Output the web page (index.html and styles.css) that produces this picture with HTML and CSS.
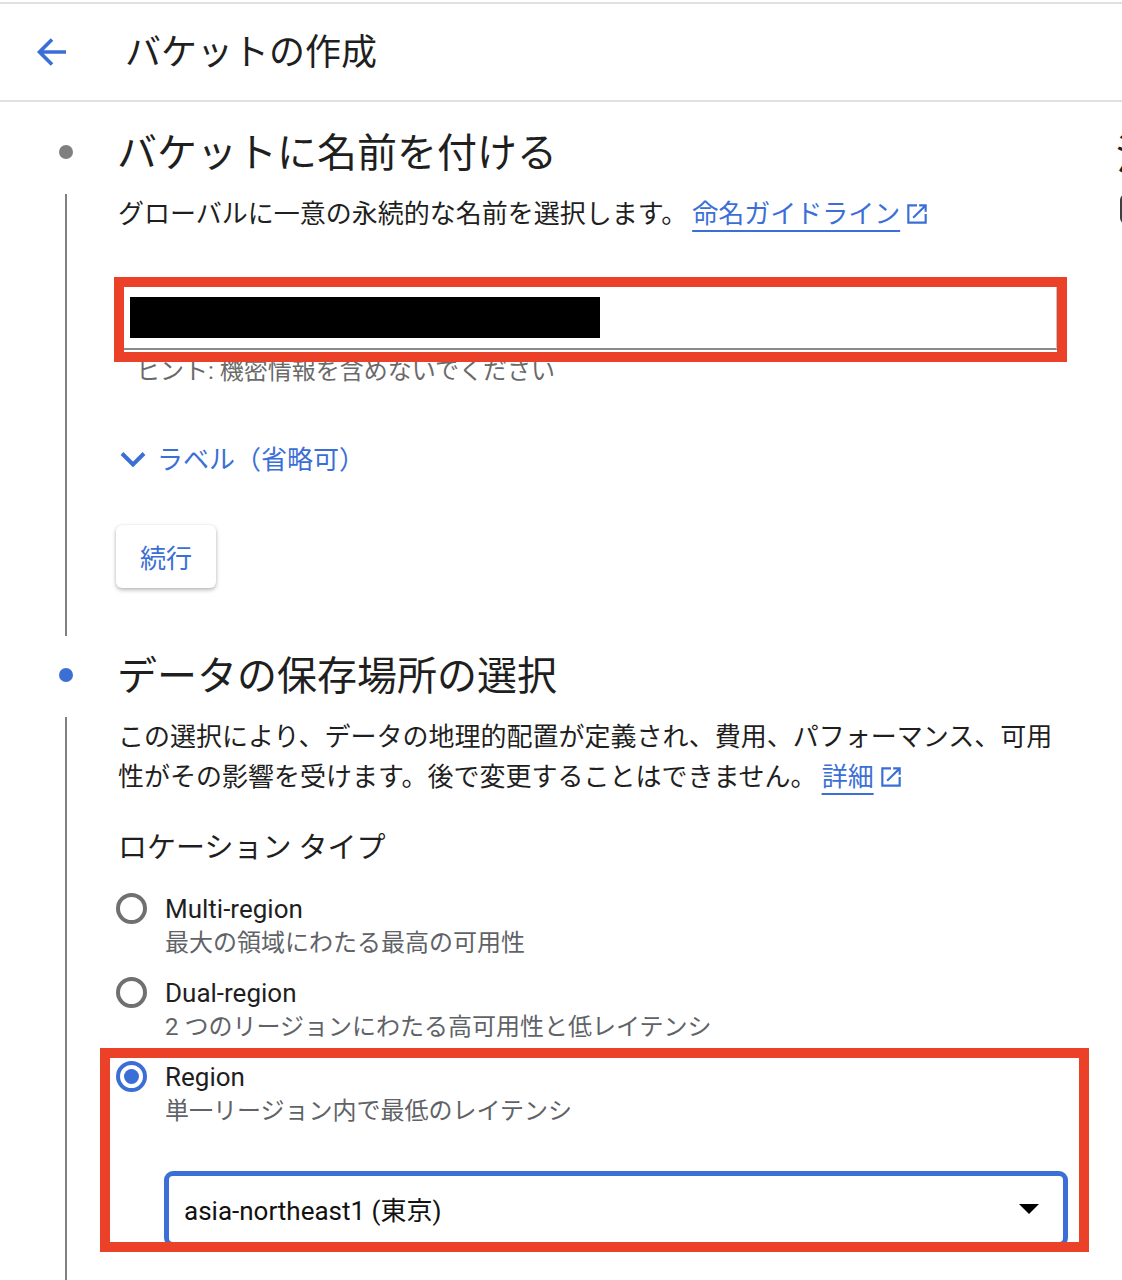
FILE: index.html
```html
<!DOCTYPE html>
<html lang="ja">
<head>
    <meta charset="UTF-8">
    <meta name="viewport" content="width=device-width, initial-scale=1.0">
    <title>バケットの作成</title>
    <link rel="stylesheet" href="styles.css">
</head>
<body>
    <header class="topbar">
        <a class="back" href="#">
            <svg width="32" height="32" viewBox="0 0 32 32" aria-hidden="true">
                <path d="M30 16H4M16 3.5 3.5 16 16 28.5" fill="none" stroke="#3b6fd6" stroke-width="3.6"/>
            </svg>
        </a>
        <h1>バケットの作成</h1>
    </header>

    <div class="layout">
        <main class="steps">
            <!-- step 1: name -->
            <section class="step">
                <div class="step-head">
                    <span class="dot"></span>
                    <h2>バケットに名前を付ける</h2>
                </div>
                <div class="step-body">
                    <p class="desc">グローバルに一意の永続的な名前を選択します。<a class="ext" href="#"><span>命名ガイドライン</span><svg width="26" height="26" viewBox="0 0 24 24" aria-hidden="true"><path d="M19 19H5V5h7V3H3v18h18v-9h-2v7zM14 3v2h3.59l-9.83 9.83 1.41 1.41L19 6.41V10h2V3h-7z" fill="#3b6fd6"/></svg></a></p>

                    <div class="annot annot-name">
                        <div class="name-field">
                            <span class="redact"></span>
                        </div>
                    </div>
                    <p class="hint">ヒント: 機密情報を含めないでください</p>

                    <a class="toggle" href="#">
                        <svg width="26" height="16" viewBox="0 0 26 16" aria-hidden="true">
                            <path d="M2 2.5 13 13.5 24 2.5" fill="none" stroke="#3b6fd6" stroke-width="4"/>
                        </svg>
                        <span>ラベル（省略可）</span>
                    </a>

                    <button class="btn" type="button">続行</button>
                </div>
            </section>

            <!-- step 2: location -->
            <section class="step">
                <div class="step-head">
                    <span class="dot active"></span>
                    <h2>データの保存場所の選択</h2>
                </div>
                <div class="step-body long">
                    <p class="desc">この選択により、データの地理的配置が定義され、費用、パフォーマンス、可用性がその影響を受けます。後で変更することはできません。<a class="ext" href="#"><span>詳細</span><svg width="26" height="26" viewBox="0 0 24 24" aria-hidden="true"><path d="M19 19H5V5h7V3H3v18h18v-9h-2v7zM14 3v2h3.59l-9.83 9.83 1.41 1.41L19 6.41V10h2V3h-7z" fill="#3b6fd6"/></svg></a></p>

                    <h3 class="field-label">ロケーション タイプ</h3>

                    <div class="options">
                        <label class="option">
                            <span class="radio"></span>
                            <span class="option-text">
                                <span class="option-title">Multi-region</span>
                                <span class="option-desc">最大の領域にわたる最高の可用性</span>
                            </span>
                        </label>
                        <label class="option">
                            <span class="radio"></span>
                            <span class="option-text">
                                <span class="option-title">Dual-region</span>
                                <span class="option-desc">2 つのリージョンにわたる高可用性と低レイテンシ</span>
                            </span>
                        </label>
                    </div>

                    <div class="annot annot-region">
                        <label class="option">
                            <span class="radio checked"></span>
                            <span class="option-text">
                                <span class="option-title">Region</span>
                                <span class="option-desc">単一リージョン内で最低のレイテンシ</span>
                            </span>
                        </label>
                        <div class="select">
                            <span>asia-northeast1 (東京)</span>
                            <span class="caret"></span>
                        </div>
                    </div>
                </div>
            </section>
        </main>

        <aside class="side">
            <h2>注意</h2>
            <div class="side-box"></div>
        </aside>
    </div>
</body>
</html>
```

FILE: styles.css
```css
html, body {
    overflow: hidden;
}

body {
    margin: 0;
    padding-top: 2px;
    font-family: Roboto, "Noto Sans CJK JP", sans-serif;
    color: #1f1f1f;
    background: #fff;
}

a {
    text-decoration: none;
}

/* header */
.topbar {
    display: flex;
    align-items: center;
    height: 96px;
    border-top: 2px solid #dfdfe4;
    border-bottom: 2px solid #dfdfe4;
    padding-left: 36px;
}

.back {
    display: flex;
    width: 32px;
    height: 32px;
}

.topbar h1 {
    margin: 0 0 6px 57px;
    font-family: "Noto Sans CJK JP", sans-serif;
    font-size: 36px;
    font-weight: 400;
    line-height: 48px;
}

.layout {
    display: flex;
}

.steps {
    flex: none;
    width: 1116px;
    padding-top: 26px;
}

/* stepper */
.step + .step {
    margin-top: 15px;
}

.step-head {
    display: flex;
    align-items: center;
    height: 48px;
}

.dot {
    flex: none;
    width: 14px;
    height: 14px;
    margin-left: 59px;
    border-radius: 50%;
    background: #7f7f7f;
}

.dot.active {
    background: #3b6fd6;
}

.step-head h2 {
    margin: 0 0 4px 44px;
    font-family: "Noto Sans CJK JP", sans-serif;
    font-size: 40px;
    font-weight: 400;
    line-height: 48px;
}

.step-body {
    margin: 18px 0 0 65px;
    border-left: 2px solid #808080;
    padding: 0 48px 48px 51px;
}

.step-body.long {
    padding-bottom: 60px;
}

.desc {
    margin: 0;
    font-size: 26px;
    line-height: 40px;
}

.ext {
    margin-left: 5px;
    color: #3b6fd6;
}

.ext span {
    text-decoration: underline;
    text-decoration-thickness: 2px;
    text-underline-offset: 7px;
}

.ext svg {
    vertical-align: -4px;
    margin-left: 4px;
}

/* red annotation frames drawn over the content */
.annot {
    position: relative;
}

.annot::after {
    content: '';
    position: absolute;
    inset: 0;
    border: 10px solid #ea4128;
    pointer-events: none;
}

.annot-name {
    z-index: 1;
    width: 933px;
    margin: 43px 0 0 -4px;
    padding: 10px;
}

.name-field {
    box-sizing: border-box;
    height: 63px;
    margin-bottom: 2px;
    padding: 10px 0 0 6px;
    border-bottom: 2px solid #8a8a8a;
    border-right: 1px solid #c4c4c4;
}

.redact {
    display: block;
    width: 470px;
    height: 41px;
    background: #000;
}

.hint {
    position: relative;
    margin: -7px 0 0;
    padding-left: 18px;
    font-size: 24px;
    line-height: 32px;
    color: #6a6a6a;
}

.toggle {
    display: flex;
    align-items: center;
    gap: 11px;
    margin-top: 52px;
    margin-left: 2px;
    height: 40px;
    font-size: 26px;
    color: #3b6fd6;
}

.toggle span {
    margin-bottom: 3px;
}

.btn {
    display: block;
    margin: 46px 0 0 -2px;
    height: 63px;
    padding: 0 24px;
    border: none;
    border-radius: 6px;
    background: #fff;
    box-shadow: 0 2px 4px rgba(0, 0, 0, 0.28), 0 0 2px rgba(0, 0, 0, 0.08);
    font-family: inherit;
    font-size: 26px;
    color: #3b6fd6;
}

/* location type */
.field-label {
    margin: 31px 0 0;
    font-size: 29px;
    font-weight: 400;
    line-height: 40px;
}

.options {
    display: flex;
    flex-direction: column;
    gap: 16px;
    margin-top: 24px;
}

.option {
    display: flex;
    gap: 18px;
    margin-left: -2px;
}

.radio {
    flex: none;
    box-sizing: border-box;
    width: 31px;
    height: 31px;
    margin-top: 1px;
    border: 4px solid #707070;
    border-radius: 50%;
    display: flex;
    align-items: center;
    justify-content: center;
}

.radio.checked {
    border-color: #3b6fd6;
}

.radio.checked::before {
    content: '';
    width: 15px;
    height: 15px;
    border-radius: 50%;
    background: #3b6fd6;
}

.option-text {
    display: flex;
    flex-direction: column;
}

.option-title {
    font-size: 26px;
    line-height: 34px;
}

.option-desc {
    font-size: 24px;
    line-height: 34px;
    color: #5f6368;
}

.annot-region {
    width: 952px;
    margin: 4px 0 0 -18px;
    padding: 12px 21px 5px 16px;
}

.annot-region .option {
    margin-left: 0;
}

.select {
    display: flex;
    align-items: center;
    justify-content: space-between;
    height: 64px;
    margin: 43px 0 0 48px;
    padding: 0 24px 2px 15px;
    border: 5px solid #3b6fd6;
    border-radius: 9px;
    font-size: 26px;
    color: #111;
}

.caret {
    width: 0;
    height: 0;
    border-left: 10px solid transparent;
    border-right: 10px solid transparent;
    border-top: 10px solid #000;
    margin-top: 2px;
}

/* side panel, mostly off screen */
.side {
    flex: none;
    width: 300px;
    padding-top: 26px;
}

.side h2 {
    margin: 0 0 4px;
    font-family: "Noto Sans CJK JP", sans-serif;
    font-size: 40px;
    font-weight: 400;
    line-height: 48px;
}

.side-box {
    width: 120px;
    height: 26px;
    margin: 18px 0 0 4px;
    border: 2px solid #3c4043;
    border-radius: 6px;
}
```
